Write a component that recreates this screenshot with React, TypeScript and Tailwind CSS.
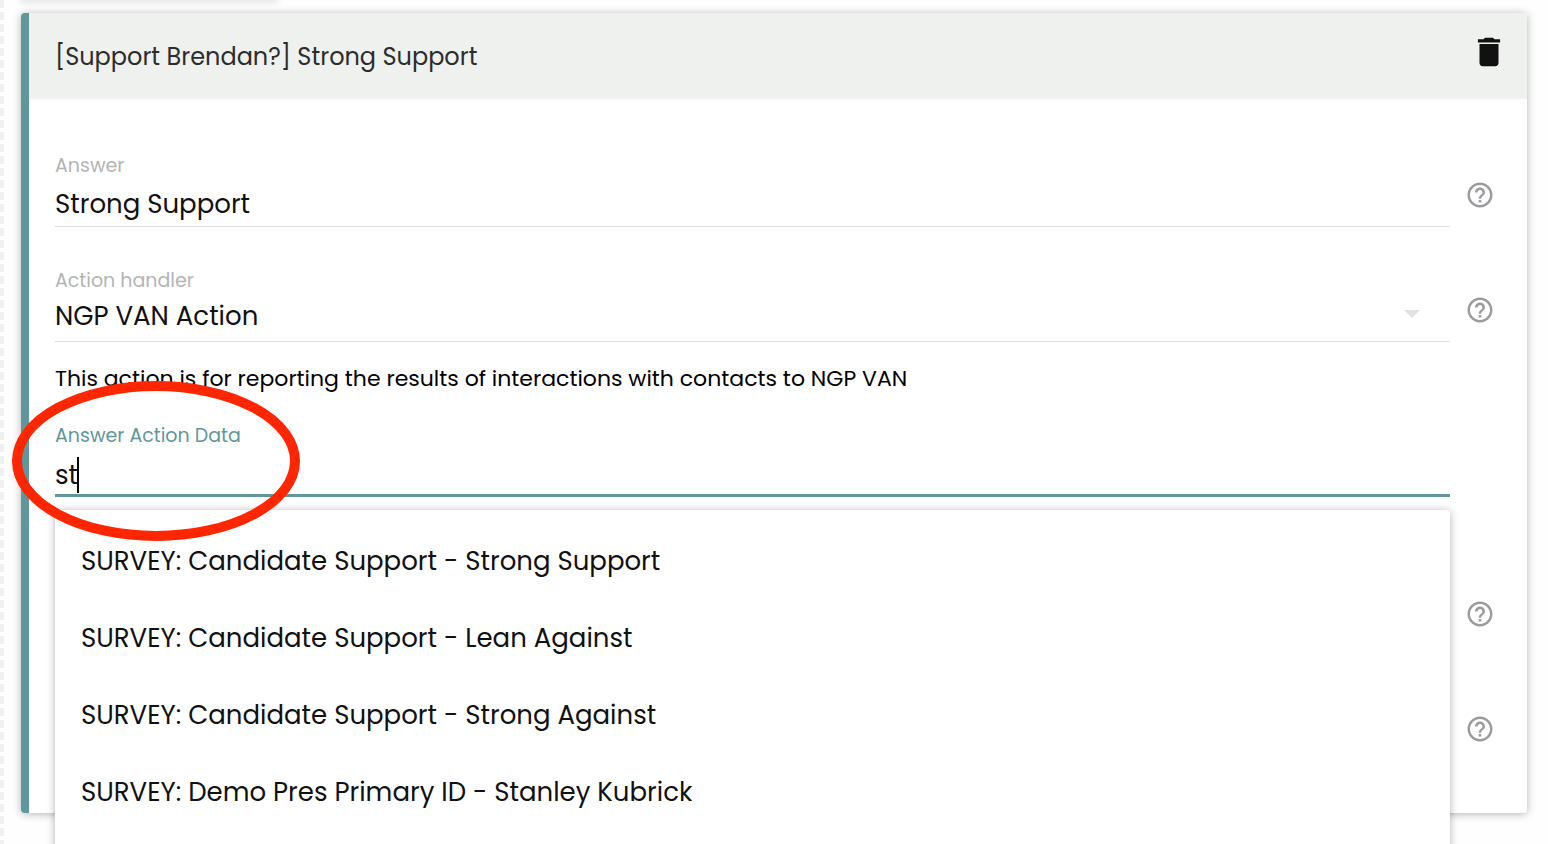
import { useState } from "react";
import type { ReactNode } from "react";
import { MdDelete, MdHelpOutline } from "react-icons/md";

const suggestions = [
  "SURVEY: Candidate Support - Strong Support",
  "SURVEY: Candidate Support - Lean Against",
  "SURVEY: Candidate Support - Strong Against",
  "SURVEY: Demo Pres Primary ID - Stanley Kubrick",
];

function FieldRow({ className = "", children }: { className?: string; children?: ReactNode }) {
  return (
    <div className={`flex items-end gap-[15px] ${className}`}>
      <div className="min-w-0 flex-1">{children}</div>
      <button type="button" aria-label="Help" className="mb-[17px] shrink-0 text-[#9a9b9e]">
        <MdHelpOutline size={30} />
      </button>
    </div>
  );
}

export default function App() {
  const [answer, setAnswer] = useState("Strong Support");
  const [actionData, setActionData] = useState("st");

  return (
    <div className="flex min-h-screen overflow-hidden bg-[#fefefe] font-[Poppins,Inter,sans-serif] text-[#111]">
      <div className="w-1 shrink-0 bg-[repeating-linear-gradient(to_bottom,#eff1ee_0px,#eff1ee_8px,transparent_8px,transparent_12px)]" />

      <main className="min-w-0 flex-1 pr-[21px] pl-[17px]">
        <div className="h-0 w-64 shadow-[0_0_6px_1px_rgba(0,0,0,0.3)]" />

        <section className="mt-[13px] rounded border-l-8 border-[#5f979b] bg-white shadow-[0_1px_8px_rgba(0,0,0,0.3)]">
          <header className="flex h-[86px] items-center justify-between rounded-tr bg-[#eff1ee] pr-[19px] pl-[26px]">
            <h2 className="pt-0.5 text-[24px] text-[#2c2c2c]">[Support Brendan?] Strong Support</h2>
            <button type="button" aria-label="Delete" className="mb-2">
              <MdDelete size={38} />
            </button>
          </header>

          <form className="pt-[55px] pr-8 pb-[52px] pl-[26px]">
            <FieldRow>
              <label htmlFor="answer" className="block text-[19px] leading-6 text-[#b4b4b4]">Answer</label>
              <input
                id="answer"
                value={answer}
                onChange={(e) => setAnswer(e.target.value)}
                className="mt-[3px] block h-[46px] w-full border-b border-[#dedede] pt-0.5 text-[26px] outline-none"
              />
            </FieldRow>

            <FieldRow className="mt-[42px]">
              <label htmlFor="handler" className="block text-[19px] leading-6 text-[#b4b4b4]">Action handler</label>
              <div className="relative mt-[3px]">
                <select
                  id="handler"
                  className="block h-[46px] w-full appearance-none border-b border-[#dedede] pb-1 text-[26px] outline-none"
                >
                  <option>NGP VAN Action</option>
                </select>
                <svg width="16" height="8" viewBox="0 0 16 8" className="pointer-events-none absolute top-3.5 right-[30px]">
                  <path d="M0 0h16l-8 8z" fill="#e0e2df" />
                </svg>
              </div>
            </FieldRow>

            <p className="mt-[21px] text-[22px] leading-8 text-black">
              This action is for reporting the results of interactions with contacts to NGP VAN
            </p>

            <div className="relative mt-[29px] mr-[45px]">
              <label htmlFor="action-data" className="block text-[19px] leading-6 text-[#5f979b]">Answer Action Data</label>
              <input
                id="action-data"
                value={actionData}
                onChange={(e) => setActionData(e.target.value)}
                className="mt-[3px] block h-[46px] w-full border-b-3 border-[#5f979b] pt-1.5 text-[26px] caret-transparent outline-none"
              />
              <span className="absolute top-[33px] left-[22px] h-9 w-0.5 bg-black" />

              <ul className="absolute inset-x-0 top-[86px] z-10 rounded bg-white pt-[13px] pb-6 shadow-[0_1px_8px_rgba(0,0,0,0.3)]">
                {suggestions.map((item) => (
                  <li key={item}>
                    <button type="button" className="block h-[77px] w-full px-[26px] text-left text-[26px]">
                      {item}
                    </button>
                  </li>
                ))}
              </ul>

              <svg width="288" height="160" viewBox="0 0 288 160" className="pointer-events-none absolute -top-[43px] -left-[43px] z-20">
                <ellipse cx="144" cy="80" rx="139" ry="75" fill="none" stroke="#ff2600" strokeWidth="10" />
              </svg>
            </div>

            <FieldRow className="mt-[75px] h-[74px]" />
            <FieldRow className="mt-[41px] h-[74px]" />
          </form>
        </section>
      </main>
    </div>
  );
}
